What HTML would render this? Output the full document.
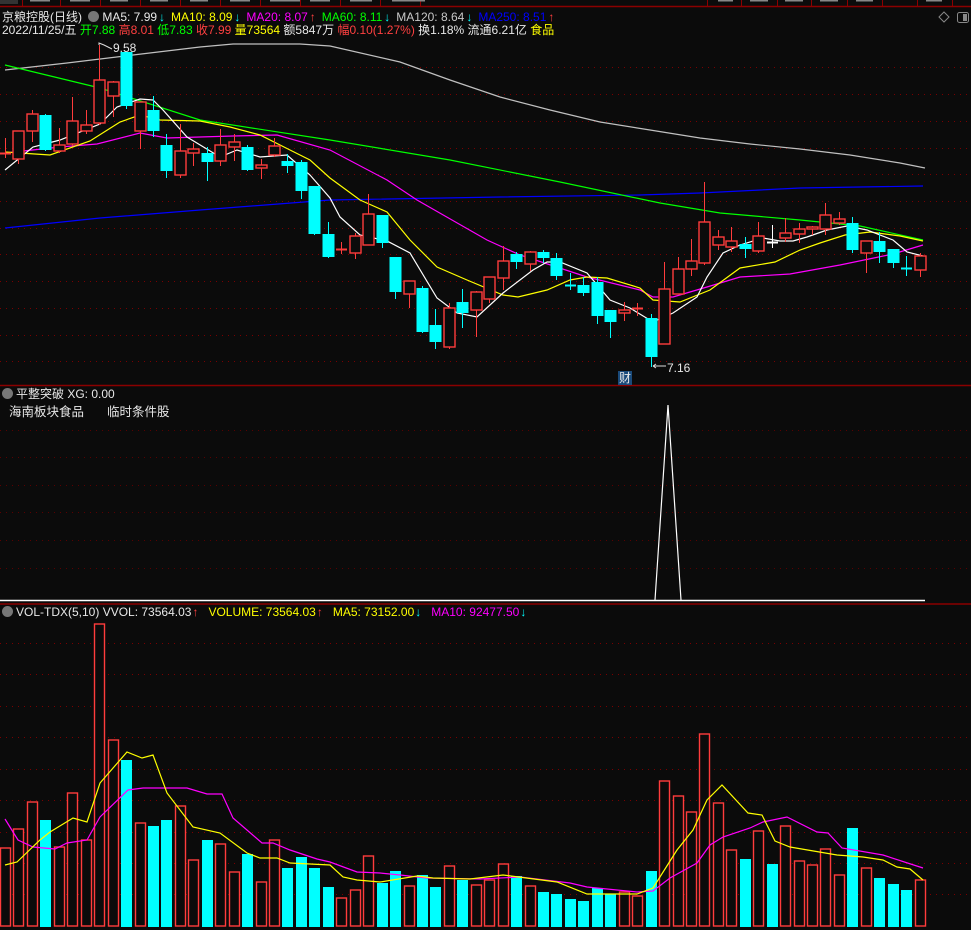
<!DOCTYPE html>
<html><head><meta charset="utf-8">
<style>
html,body{margin:0;padding:0;background:#0b0b0b;}
body{width:971px;height:930px;position:relative;overflow:hidden;font-family:"Liberation Sans","Noto Sans CJK SC",sans-serif;font-size:12px;}
.t{position:absolute;white-space:nowrap;line-height:14px;}
.w{color:#e8e8e8}.y{color:#ffff00}.m{color:#ff00ff}.g{color:#00ff00}.r{color:#ff4040}.gr{color:#c8c8c8}.b{color:#0000ff}.c{color:#00ffff}
.ic{display:inline-block;width:11px;height:11px;border-radius:50%;background:#777;vertical-align:-1px;margin-right:3px;}
.a{display:inline-block;margin:0 6px 0 2px;font-weight:bold}
.a2{display:inline-block;margin:0 10px 0 1px;font-weight:bold}
svg{position:absolute;left:0;top:0}
</style></head><body>
<svg id="s" width="971" height="930" xmlns="http://www.w3.org/2000/svg"></svg>
<div class="t" style="left:2px;top:10px"><span class="w">京粮控股(日线)</span> <span class="ic" style="margin-left:3px"></span><span class="w">MA5: 7.99</span><span class="c a">↓</span><span class="y">MA10: 8.09</span><span class="c a">↓</span><span class="m">MA20: 8.07</span><span class="r a">↑</span><span class="g">MA60: 8.11</span><span class="c a">↓</span><span class="gr">MA120: 8.64</span><span class="c a">↓</span><span class="b">MA250: 8.51</span><span class="r a">↑</span></div>
<div class="t" style="left:2px;top:23px"><span class="w">2022/11/25/五</span> <span class="g">开7.88</span> <span class="r">高8.01</span> <span class="g">低7.83</span> <span class="r">收7.99</span> <span class="y">量73564</span> <span class="w">额5847万</span> <span class="r">幅0.10(1.27%)</span> <span class="w">换1.18%</span> <span class="w">流通6.21亿</span> <span class="y">食品</span></div>
<div class="t w" style="left:113px;top:41px">9.58</div>
<div class="t w" style="left:667px;top:361px">7.16</div>
<div class="t w" style="left:618px;top:371px;background:#1a4a7a;padding:0 1px">财</div>
<div class="t" style="left:2px;top:387px"><span class="ic"></span><span class="w">平整突破 XG: 0.00</span></div>
<div class="t w" style="left:9px;top:405px;font-size:12.5px">海南板块食品</div>
<div class="t w" style="left:107px;top:405px;font-size:12.5px">临时条件股</div>
<div class="t" style="left:2px;top:605px"><span class="ic"></span><span class="w">VOL-TDX(5,10) VVOL: 73564.03</span><span class="r a2">↑</span><span class="y">VOLUME: 73564.03</span><span class="r a2">↑</span><span class="y">MA5: 73152.00</span><span class="c a2">↓</span><span class="m">MA10: 92477.50</span><span class="c a2">↓</span></div>
<script>
var S=document.getElementById('s'),h='';
function L(x1,y1,x2,y2,c,w,d){h+='<line x1="'+x1+'" y1="'+y1+'" x2="'+x2+'" y2="'+y2+'" stroke="'+c+'" stroke-width="'+(w||1)+'"'+(d?' stroke-dasharray="'+d+'"':'')+'/>';}
function P(pts,c){h+='<polyline fill="none" stroke="'+c+'" stroke-width="1.2" points="'+pts.map(function(p){return p.join(',')}).join(' ')+'"/>';}
L(0,6.5,971,6.5,'#8b0000',1.5);
[22,60,100,140,180,220,260,300,340,380,420,707,741,777,811,847,882,917,952].forEach(function(x){L(x+.5,0,x+.5,6,'#8b0000',1)});
h+='<rect x="0" y="0" width="18" height="4" fill="#333"/>';
[[30,50],[70,90],[110,128],[150,168],[190,208],[230,250],[270,300],[310,330],[350,372],[392,425],[718,733],[750,768],[785,803],[820,838],[856,873],[926,942]].forEach(function(a){h+='<rect x="'+a[0]+'" y="0" width="'+(a[1]-a[0])+'" height="1.5" fill="#888"/>'});
h+='<path d="M944 12 L949 17 L944 22 L939 17 Z" fill="none" stroke="#888"/>';
h+='<rect x="957.5" y="12.5" width="11" height="10" rx="2" fill="none" stroke="#888"/><rect x="963" y="14" width="4" height="7" fill="#888"/>';
[67,94,121,148,174,201,228,254,281,308,335,361].forEach(function(y){L(0,y+.5,971,y+.5,'#7a0000',1,'1,5')});
L(0,385.5,971,385.5,'#8b0000',1.5);
[430,457,485,512,540,568].forEach(function(y){L(0,y+.5,971,y+.5,'#5a0000',1,'1,5')});
L(0,600.5,925,600.5,'#ffffff',1.5);
L(0,604,971,604,'#8b0000',1.5);
[643,674,706,737,769,800,832,863,894].forEach(function(y){L(0,y+.5,971,y+.5,'#7a0000',1,'1,5')});
P([[5,228],[100,218],[200,210],[330,200],[500,197],[640,195],[700,193],[800,188],[923,186]],'#0000ff');
P([[5,70],[67,63],[133,55],[200,47],[233,44],[300,44],[330,46],[400,62],[450,80],[500,97],[550,110],[600,122],[650,130],[700,138],[750,144],[800,149],[850,155],[900,163],[925,168]],'#c0c0c0');
P([[5,65],[100,88],[200,120],[330,140],[450,160],[560,182],[660,203],[720,213],[800,220],[860,226],[923,240]],'#00ff00');
P([[5,153],[60,147],[97,144],[140,133],[167,138],[233,136],[277,135],[330,150],[387,180],[417,200],[487,240],[520,255],[587,277],[640,290],[653,297],[673,297],[707,287],[740,277],[790,274],[840,265],[893,254],[923,245]],'#ff00ff');
P([[5,152],[50,155],[90,141],[120,122],[140,115],[160,120],[200,121],[230,127],[260,135],[290,150],[310,160],[330,178],[360,200],[387,212],[410,240],[437,267],[467,280],[503,295],[518,297],[547,290],[570,280],[587,277],[607,278],[640,288],[653,300],[680,302],[710,290],[740,268],[775,262],[800,250],[820,243],[845,235],[870,232],[900,236],[923,241]],'#ffff00');
P([[5,170],[33,147],[60,140],[100,124],[117,107],[140,99],[153,100],[163,110],[187,137],[220,157],[237,150],[260,157],[287,155],[310,175],[330,198],[340,217],[360,235],[387,241],[410,253],[437,298],[457,313],[477,317],[503,293],[533,270],[547,262],[560,262],[587,273],[610,300],[630,308],[653,322],[673,313],[697,297],[707,277],[723,253],[740,245],[763,238],[780,241],[793,241],[807,237],[827,230],[847,226],[867,230],[893,240],[907,252],[923,256]],'#ffffff');
var C=[[153,153,138,158,'r'],[131,159,131,164,'r'],[114,131,110,142,'r'],[115,150,114,151,'c'],[145,151,128,153,'r'],[121,144,97,146,'r'],[125,131,110,134,'r'],[80,123,45,125,'r'],[82,96,81,117,'r'],[52,106,52,109,'c'],[102,131,102,149,'r'],[110,131,96,137,'c'],[145,171,134,178,'c'],[151,175,124,178,'r'],[149,153,143,166,'r'],[153,162,147,181,'c'],[145,161,129,166,'r'],[142,147,134,161,'r'],[147,170,145,171,'c'],[165,168,159,179,'r'],[146,155,138,157,'r'],[161,166,154,173,'c'],[162,191,160,199,'c'],[186,234,186,235,'c'],[234,257,222,258,'c'],[249,249,242,254,'r'],[236,253,233,259,'r'],[214,245,194,245,'r'],[215,243,215,248,'c'],[257,292,257,299,'c'],[281,294,281,308,'r'],[288,332,286,333,'c'],[325,342,309,349,'c'],[308,347,303,349,'r'],[302,313,289,328,'c'],[292,310,291,337,'r'],[277,299,277,303,'r'],[261,278,246,290,'r'],[254,262,252,269,'c'],[252,264,251,271,'r'],[252,258,250,263,'c'],[258,276,253,280,'c'],[285,285,273,290,'c'],[285,293,277,296,'c'],[282,316,277,324,'c'],[310,322,310,338,'c'],[310,313,302,321,'r'],[308,308,303,316,'r'],[318,357,314,367,'c'],[289,344,262,344,'r'],[269,294,257,294,'r'],[261,269,239,276,'r'],[222,263,182,265,'r'],[237,245,230,250,'r'],[241,247,227,252,'r'],[244,249,237,258,'c'],[236,251,222,253,'r'],[242,242,225,248,'w'],[233,238,218,242,'r'],[229,234,223,243,'r'],[227,229,226,235,'r'],[215,229,203,235,'r'],[219,223,212,225,'r'],[223,250,217,253,'c'],[241,253,241,273,'r'],[241,252,232,263,'c'],[249,263,249,268,'c'],[268,268,256,276,'c'],[256,270,253,277,'r']];
var V=[848,829,802,820,847,793,840,624,740,760,823,826,820,806,860,840,844,872,854,882,840,868,857,868,887,898,890,856,883,871,886,875,887,866,880,885,880,864,876,886,892,894,899,901,888,894,892,896,871,781,796,812,734,803,850,859,831,864,826,861,865,849,875,828,868,878,884,890,880];
var RED='#ff3c3c',CY='#00ffff';
C.forEach(function(k,i){
 var x=Math.round(5+13.45*i),t=k[0],b=k[1],hi=k[2],lo=k[3],col=k[4]=='r'?RED:(k[4]=='c'?CY:'#fff');
 var xc=x+.5;
 L(xc,hi,xc,lo,col,1);
 if(b-t<2){L(x-5,t+.5,x+6,t+.5,col,2);}
 else if(k[4]=='r'){h+='<rect x="'+(x-5)+'" y="'+t+'" width="11" height="'+(b-t)+'" fill="#0b0b0b" stroke="'+RED+'" stroke-width="1.4"/>';}
 else{h+='<rect x="'+(x-5.5)+'" y="'+t+'" width="12" height="'+(b-t)+'" fill="'+col+'"/>';}
 var v=V[i];
 if(k[4]=='r')h+='<rect x="'+(x-4.5)+'" y="'+v+'" width="10" height="'+(926-v)+'" fill="#0b0b0b" stroke="'+RED+'" stroke-width="1.4"/>';
 else h+='<rect x="'+(x-5)+'" y="'+v+'" width="11" height="'+(927-v)+'" fill="'+CY+'"/>';
});
h+='<polyline fill="none" stroke="#ddd" points="99,45 99,43 104,45 112,49"/><line x1="653" y1="366" x2="666" y2="366" stroke="#ddd"/><path d="M653 366 l3 -2 M653 366 l3 2" stroke="#ddd"/>';
P([[655,600],[668,405],[681,600]],'#ffffff');
P([[5,819],[18,840],[33,847],[55,849],[67,843],[87,840],[100,817],[128,790],[143,788],[187,788],[207,794],[222,794],[233,818],[262,843],[273,843],[290,850],[317,859],[330,862],[357,872],[380,873],[400,875],[427,878],[480,879],[520,877],[570,883],[587,887],[637,892],[653,891],[670,878],[697,863],[710,845],[723,837],[750,828],[763,822],[787,817],[817,832],[828,833],[842,848],[883,855],[923,868]],'#ff00ff');
P([[5,865],[17,862],[40,840],[50,832],[73,818],[87,822],[100,783],[127,752],[142,758],[153,755],[167,793],[193,827],[220,833],[247,853],[260,858],[277,858],[290,863],[330,865],[343,877],[357,880],[380,882],[417,876],[433,878],[470,879],[503,875],[557,882],[587,894],[637,894],[653,888],[677,850],[693,830],[707,800],[722,785],[748,813],[762,815],[775,841],[790,847],[837,855],[863,857],[883,860],[897,867],[910,869],[923,880]],'#ffff00');
S.innerHTML=h;
</script>
</body></html>
